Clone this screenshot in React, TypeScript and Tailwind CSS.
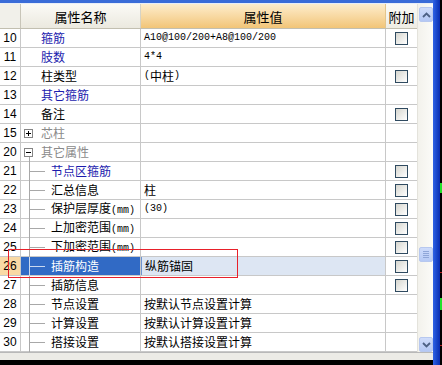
import React from "react";

type Row = {
  n: string;
  name: string;
  unit?: string;
  color?: "blue" | "gray" | "black";
  value?: string;
  cb?: boolean;
  tree?: boolean;
  expander?: "+" | "-";
  selected?: boolean;
};

const rows: Row[] = [
  { n: "10", name: "箍筋", color: "blue", value: "A10@100/200+A8@100/200", cb: true },
  { n: "11", name: "肢数", color: "blue", value: "4*4" },
  { n: "12", name: "柱类型", value: "(中柱)", cb: true },
  { n: "13", name: "其它箍筋", color: "blue" },
  { n: "14", name: "备注", cb: true },
  { n: "15", name: "芯柱", color: "gray", expander: "+" },
  { n: "20", name: "其它属性", color: "gray", expander: "-" },
  { n: "21", name: "节点区箍筋", color: "blue", tree: true, cb: true },
  { n: "22", name: "汇总信息", value: "柱", tree: true, cb: true },
  { n: "23", name: "保护层厚度", unit: "(mm)", value: "(30)", tree: true, cb: true },
  { n: "24", name: "上加密范围", unit: "(mm)", tree: true, cb: true },
  { n: "25", name: "下加密范围", unit: "(mm)", tree: true, cb: true },
  { n: "26", name: "插筋构造", value: "纵筋锚固", tree: true, cb: true, selected: true },
  { n: "27", name: "插筋信息", tree: true, cb: true },
  { n: "28", name: "节点设置", value: "按默认节点设置计算", tree: true },
  { n: "29", name: "计算设置", value: "按默认计算设置计算", tree: true },
  { n: "30", name: "搭接设置", value: "按默认搭接设置计算", tree: true },
];

function Mixed({ s }: { s: string }) {
  const parts = s.split(/([\x00-\x7f]+)/).filter((p) => p.length > 0);
  return (
    <>
      {parts.map((p, i) =>
        /^[\x00-\x7f]+$/.test(p) ? (
          <span key={i} className="font-['Liberation_Mono',monospace] text-[10px]">
            {p}
          </span>
        ) : (
          <span key={i}>{p}</span>
        )
      )}
    </>
  );
}

function Checkbox() {
  return (
    <div className="w-[13px] h-[13px] border border-[#2f4a60] bg-linear-to-br from-[#d6d6cf] to-white" />
  );
}

function Chevron({ up }: { up?: boolean }) {
  return (
    <svg width="9" height="6" viewBox="0 0 9 6">
      <path
        d={up ? "M1 5 L4.5 1.5 L8 5" : "M1 1 L4.5 4.5 L8 1"}
        fill="none"
        stroke="#4d6185"
        strokeWidth="1.8"
      />
    </svg>
  );
}

export default function App() {
  return (
    <div className="relative w-[442px] h-[365px] bg-black overflow-hidden flex font-['Noto_Sans_CJK_SC',sans-serif] text-[12px] leading-none">
      {/* left main */}
      <div className="w-[433px] h-[360px] flex flex-col bg-[#ecebe6]">
        <div className="h-[3px] bg-[#3a6cd8]" />
        <div className="h-[1px] bg-[#e8eef8]" />
        <div className="flex h-[348px]">
          {/* table */}
          <div className="w-[417px] flex flex-col bg-white">
            {/* header */}
            <div className="flex h-[25px] border-b border-[#c2bfb0]">
              <div className="w-[21px] border-r border-[#c8c5b8] bg-[#f1f0ea]" />
              <div className="w-[120px] border-r border-[#d6d3c6] bg-linear-to-b from-[#fbfaf6] to-[#ebe9df] flex items-center justify-center text-[13px]">
                属性名称
              </div>
              <div className="w-[245px] border-r border-[#e3c58c] bg-linear-to-b from-[#fdedcc] to-[#f2c577] flex items-center justify-center text-[13px]">
                属性值
              </div>
              <div className="w-[31px] bg-linear-to-b from-[#fbfaf6] to-[#efede4] flex items-center justify-center text-[13px]">
                附加
              </div>
            </div>
            {/* rows */}
            {rows.map((r) => {
              const color =
                r.color === "blue"
                  ? "text-[#1c1cae]"
                  : r.color === "gray"
                  ? "text-[#8a8a8a]"
                  : "text-black";
              return (
                <div key={r.n} className="flex h-[19px] border-b border-[#c8c8c8]">
                  <div
                    className={`w-[21px] border-r border-[#c8c8c8] flex items-center justify-center font-['Liberation_Sans',sans-serif] text-[12px] ${
                      r.selected ? "bg-[#f9d9a4]" : "bg-white"
                    }`}
                  >
                    {r.n}
                  </div>
                  <div
                    className={`relative w-[120px] border-r border-[#c8c8c8] flex items-center ${
                      r.selected ? "bg-[#316ac5] text-white" : color
                    } ${r.tree ? "pl-[30px]" : "pl-[20px]"}`}
                  >
                    {r.tree && (
                      <>
                        <span
                          className={`absolute left-[8px] top-0 bottom-[-1px] w-px ${
                            r.selected ? "bg-[#c9d8f0]" : "bg-[#a8a8a8]"
                          }`}
                        />
                        <span
                          className={`absolute left-[9px] top-[9px] w-[15px] h-px ${
                            r.selected ? "bg-[#c9d8f0]" : "bg-[#a8a8a8]"
                          }`}
                        />
                      </>
                    )}
                    {r.expander && (
                      <>
                        <span className="absolute left-[3px] top-[5px] w-[9px] h-[9px] border border-[#848484] bg-white">
                          <span className="absolute left-[1px] top-[3px] w-[5px] h-px bg-black" />
                          {r.expander === "+" && (
                            <span className="absolute left-[3px] top-[1px] w-px h-[5px] bg-black" />
                          )}
                        </span>
                        {r.expander === "-" && (
                          <span className="absolute left-[8px] top-[14px] bottom-[-1px] w-px bg-[#a8a8a8]" />
                        )}
                      </>
                    )}
                    <span className="relative whitespace-nowrap">
                      {r.name}
                      {r.unit && (
                        <span className="font-['Liberation_Mono',monospace] text-[10px]">{r.unit}</span>
                      )}
                    </span>
                  </div>
                  <div
                    className={`w-[245px] border-r border-[#c8c8c8] flex items-center pl-[3px] text-black whitespace-nowrap ${
                      r.selected ? "bg-[#dde6f3] border-l border-l-[#6f94d0] pl-[2px]" : ""
                    }`}
                  >
                    {r.value && <Mixed s={r.value} />}
                  </div>
                  <div className="w-[31px] flex items-center justify-center">
                    {r.cb && <Checkbox />}
                  </div>
                </div>
              );
            })}
          </div>
          {/* scrollbar */}
          <div className="w-[16px] flex flex-col bg-linear-to-r from-[#f3f2ec] to-[#fbfbf8] border-l border-[#e4e3dc]">
            <div className="mt-[3px] ml-[1px] w-[14px] h-[15px] rounded-[2px] border border-[#b7c8ef] bg-linear-to-b from-[#cfdcfb] to-[#b4c8f4] flex items-center justify-center">
              <Chevron up />
            </div>
            <div className="h-[225px]" />
            <div className="ml-[1px] w-[14px] h-[15px] rounded-[2px] border border-[#b7c8ef] bg-linear-to-b from-[#cddbfb] to-[#b6caf5] flex flex-col items-center justify-center gap-[1px]">
              <span className="w-[6px] h-px bg-[#8fa6d8]" />
              <span className="w-[6px] h-px bg-[#8fa6d8]" />
              <span className="w-[6px] h-px bg-[#8fa6d8]" />
              <span className="w-[6px] h-px bg-[#8fa6d8]" />
            </div>
            <div className="flex-1" />
            <div className="ml-[1px] w-[14px] h-[15px] rounded-[2px] border border-[#b7c8ef] bg-linear-to-b from-[#cfdcfb] to-[#b4c8f4] flex items-center justify-center">
              <Chevron />
            </div>
          </div>
        </div>
        <div className="h-[8px] border-t border-[#b8b8b8] bg-[#ecebe6]" />
      </div>
      {/* right blue bar */}
      <div className="w-[7px] h-full bg-linear-to-r from-[#2e62e6] to-[#0a2cb0]" />
      <div className="relative w-[2px] h-full bg-black">
        <span className="absolute left-0 top-[183px] w-[2px] h-[10px] bg-[#22e22a]" />
        <span className="absolute left-0 top-[298px] w-[2px] h-[12px] bg-[#22e22a]" />
        <span className="absolute left-0 top-[272px] w-[2px] h-px bg-[#b02020]" />
        <span className="absolute left-0 top-[345px] w-[2px] h-px bg-[#b02020]" />
      </div>
      {/* red highlight box */}
      <div className="absolute left-[8px] top-[249px] w-[230px] h-[29px] border border-solid border-[#e8202a]" />
    </div>
  );
}
